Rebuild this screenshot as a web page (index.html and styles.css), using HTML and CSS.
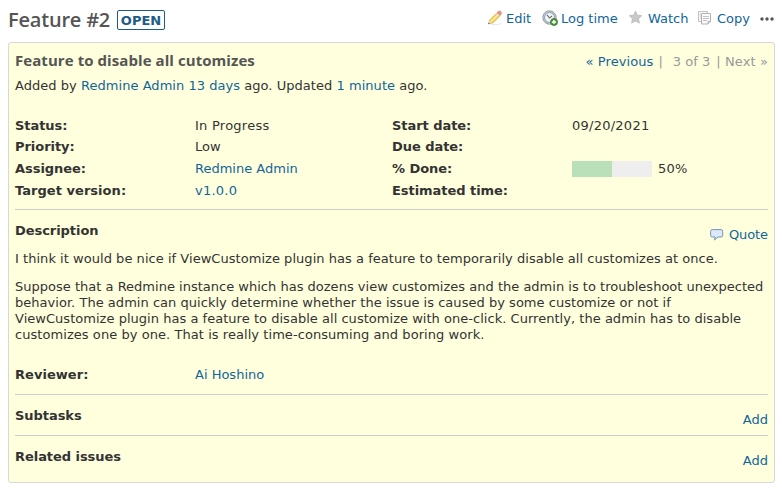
FILE: index.html
```html
<!DOCTYPE html>
<html lang="en">
<head>
<meta charset="utf-8">
<title>Feature #2</title>
<link rel="stylesheet" href="styles.css">
</head>
<body>
<header class="top">
  <h2>Feature #2</h2>
  <span class="badge">OPEN</span>
  <nav class="actions">
    <a class="edit"><svg width="16" height="16" viewBox="0 0 16 16"><path d="M4 14.500h7l3-1" stroke="#e8e8e8" fill="none"/><path d="M1.500 13.800L2.800 10 10.500 2.300l3 3L5.800 13z" fill="#f7d45a" stroke="#d3ab4e" stroke-width=".8"/><path d="M4 11.500L12 3.700" stroke="#fff0a0" stroke-width="1.200"/><path d="M10.200 2.600l1.300-1.300q1.200-.7 2.300.4t.4 2.200L13 5.300z" fill="#ee8c84" stroke="#d87770" stroke-width=".6"/><path d="M9.500 3.200l3 3" stroke="#ccd5dd" stroke-width="1.200"/><path d="M1.300 14l1.300-3.300 2.300 2.200z" fill="#f3dfbd"/><path d="M1.200 14.200l.6-1.700 1.200 1z" fill="#555"/></svg>Edit</a>
    <a class="log"><svg width="16" height="16" viewBox="0 0 16 16"><circle cx="7.500" cy="7.500" r="6.700" fill="#c3ccd5" stroke="#9a9a98"/><circle cx="7.500" cy="7.500" r="4.900" fill="#f4f8fb" stroke="#7f9fc0"/><path d="M5 4.800L7.500 8 10 6" fill="none" stroke="#766b58" stroke-width="1.100"/><circle cx="12" cy="12" r="3.500" fill="#4b9a3b" stroke="#327529" stroke-width=".8"/><path d="M12 9.900v4.200M9.900 12h4.200" stroke="#fff" stroke-width="1.300"/></svg>Log time</a>
    <a class="watch"><svg width="16" height="16" viewBox="0 0 16 16"><path d="M6.500 1.200l1.900 4 4.300.5-3.200 3 .9 4.400-3.900-2.200-3.900 2.200.9-4.400-3.200-3 4.300-.5z" fill="#c9c9c9" stroke="#b8b8b8" stroke-width=".8" stroke-linejoin="round"/></svg>Watch</a>
    <a class="copy"><svg width="16" height="16" viewBox="0 0 16 16"><path d="M.5 1.500h9v10h-9z" fill="#f7f7f7" stroke="#c2c2c2"/><path d="M2 4h1M2 6h1M2 8h1" stroke="#ccc"/><path d="M3.500 3.500h9v8l-2.500 2.500h-6.500z" fill="#fafafa" stroke="#b2b2b2"/><path d="M5 6.500h6M5 8.500h6M5 10.500h4" stroke="#c4c4c4"/><path d="M10 14v-2.500h2.500" fill="#ddd" stroke="#b2b2b2"/></svg>Copy</a>
    <svg class="more" width="14" height="4" viewBox="0 0 14 4"><circle cx="2" cy="2" r="1.700"/><circle cx="7" cy="2" r="1.700"/><circle cx="12" cy="2" r="1.700"/></svg>
  </nav>
</header>
<main class="issue">
  <div class="subject">
    <h3>Feature to disable all cutomizes</h3>
    <div class="pager"><a class="prev">« Previous</a><span class="bar">|</span><span class="pos">3 of 3</span><span class="next">| Next »</span></div>
  </div>
  <p class="author">Added by <a>Redmine Admin</a> <a>13 days</a> ago. Updated <a>1 minute</a> ago.</p>
  <div class="attributes">
    <b>Status:</b><span class="value">In Progress</span><b>Start date:</b><span class="value">09/20/2021</span>
    <b>Priority:</b><span>Low</span><b>Due date:</b><span></span>
    <b>Assignee:</b><a>Redmine Admin</a><b>% Done:</b><span class="progress value"><i class="track"><i class="done"></i></i>50%</span>
    <b class="wide">Target version:</b><a class="value">v1.0.0</a><b>Estimated time:</b><span></span>
  </div>
  <section class="description">
    <div class="section-head"><b>Description</b><a class="quote"><svg width="14" height="12" viewBox="0 0 14 12"><path d="M2.500.6h8.500q1.700 0 1.700 1.700v3.900q0 1.800-1.700 1.800H8L4.500 11l.7-3H2.500Q.6 8 .6 6.200V2.500Q.6.600 2.500.6z" fill="#dce9fb" stroke="#7595bd"/></svg>Quote</a></div>
    <p class="lead">I think it would be nice if ViewCustomize plugin has a feature to temporarily disable all customizes at once.</p>
    <p class="text"><span class="opening">Suppose that a Redmine instance which has dozens view customizes and the admin is to troubleshoot unexpected</span><br>behavior. The admin can quickly determine whether the issue is caused by some customize or not if<br>ViewCustomize plugin has a feature to disable all customize with one-click. Currently, the admin has to disable<br><span class="closing">customizes one by one. That is really time-consuming and boring work.</span></p>
  </section>
  <div class="reviewer"><b class="wide">Reviewer:</b><a>Ai Hoshino</a></div>
  <section class="related"><b>Subtasks</b><a>Add</a></section>
  <section class="related"><b>Related issues</b><a>Add</a></section>
</main>
</body>
</html>
```
FILE: styles.css
```css
* { box-sizing: border-box; }
body {
  margin: 0;
  padding: 0 7px 0 8px;
  font: 13px/16px Verdana, "DejaVu Sans", sans-serif;
  color: #333;
  background: #fff;
  white-space: nowrap;
}
h2, h3, p { margin: 0; }
a { color: #169; }
b { letter-spacing: -.05px; }
.wide { letter-spacing: .04px; }
svg { display: block; flex: none; }

.top { display: flex; height: 42px; align-items: flex-start; }
h2, h3 { font-family: "Trebuchet MS", "Open Sans", sans-serif; color: #555; }
h2 { width: 109px; font-size: 20px; font-weight: 600; line-height: 24px; padding-top: 8px; letter-spacing: -.2px; }
.badge {
  width: 48px;
  height: 20px;
  margin-top: 10px;
  border: 1px solid #205d86;
  border-radius: 2px;
  color: #205d86;
  font-weight: 700;
  line-height: 19px;
  text-align: center;
}
.actions { display: flex; margin-left: auto; padding-top: 10px; }
.actions a { display: flex; gap: 3px; line-height: 17px; }
.actions .edit { width: 55px; }
.actions .log { width: 87px; }
.actions .watch { width: 69px; }
.actions .copy { width: 62px; }
.more { fill: #555; margin-top: 7px; margin-right: 1px; }

.issue {
  height: 441px;
  padding: 6px;
  border: 1px solid #d7d7d7;
  border-radius: 3px;
  background: #ffffdd;
}
.subject { display: flex; justify-content: space-between; height: 28px; }
h3 { font-size: 15px; font-weight: 700; line-height: 22px; letter-spacing: .07px; }
.pager { display: flex; padding-top: 5px; color: #999; }
.prev { letter-spacing: .08px; }
.bar { margin: 0 10px 0 5px; }
.pos { margin-right: 6px; }
.next { letter-spacing: .12px; }
.author { height: 41px; padding-top: 1px; letter-spacing: .04px; }
.attributes {
  display: grid;
  grid-template-columns: 180px 197px 180px 1fr;
  grid-template-rows: 21px 22px 22px 26px;
}
.value { letter-spacing: .25px; }
.progress { display: flex; gap: 6px; }
.track { width: 80px; height: 16px; background: #eee; }
.done { display: block; width: 50%; height: 100%; background: #bae0ba; }

.description, .related { border-top: 1px solid #ccc; }
.description { height: 158px; padding-top: 13px; letter-spacing: .03px; }
.section-head { display: flex; justify-content: space-between; height: 28px; letter-spacing: 0; }
.quote { display: flex; gap: 5px; padding-top: 4px; letter-spacing: -.1px; }
.quote svg { margin-top: 2px; }
.lead { margin-bottom: 12px; letter-spacing: .038px; }
.opening { letter-spacing: .01px; }
.closing { letter-spacing: .06px; }
.reviewer { display: grid; grid-template-columns: 180px 1fr; height: 27px; }
.related { display: flex; justify-content: space-between; height: 41px; padding-top: 13px; }
.related a { padding-top: 4px; }
```
